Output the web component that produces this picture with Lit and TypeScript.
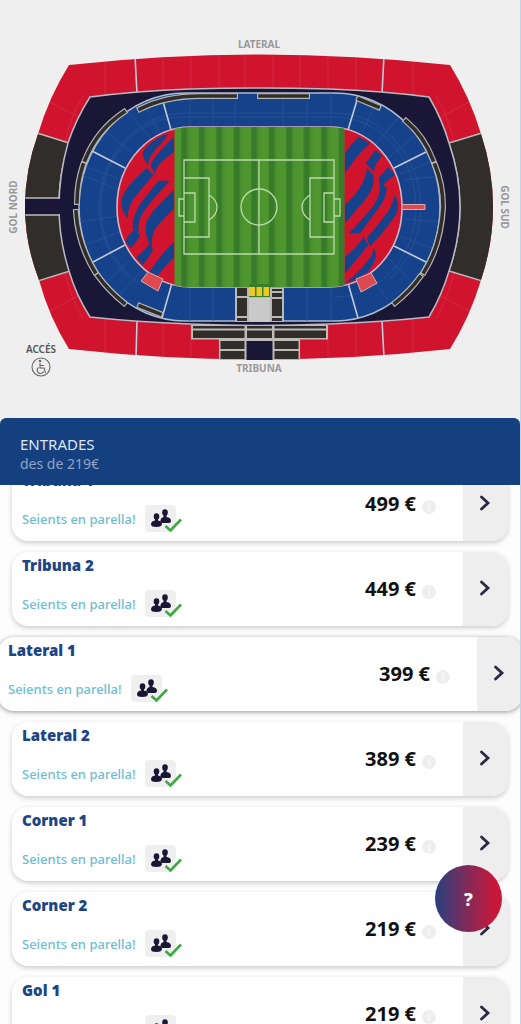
import { LitElement, html, svg, css } from "lit";
import { customElement, property } from "lit/decorators.js";

interface Zone {
  name: string;
  price: number;
  active?: boolean;
}

const ZONES: Zone[] = [
  { name: "Tribuna 1", price: 499 },
  { name: "Tribuna 2", price: 449 },
  { name: "Lateral 1", price: 399, active: true },
  { name: "Lateral 2", price: 389 },
  { name: "Corner 1", price: 239 },
  { name: "Corner 2", price: 219 },
  { name: "Gol 1", price: 219 },
];

const OUTER =
  "M69 65Q259 44 450 65Q470 97 481 134Q493 170 493 207Q493 244 481 280Q470 317 450 349Q259 370 69 349Q49 317 39 280Q25 244 25 207Q25 170 38 134Q49 97 69 65Z";
const INNER =
  "M90 97Q136 91 190 89Q259 87 329 89Q383 91 429 97Q442 119 449 143Q460 175 460 207Q460 239 449 271Q442 295 429 317Q383 322 329 324Q259 327 190 324Q136 322 90 317Q76 295 69 271Q59 239 59 207Q59 175 68 143Q76 119 90 97Z";
const BOWL =
  "M185 93H335A105 114 0 0 1 335 321H185A106 114 0 0 1 185 93Z";
const FIELD =
  "M190 127H330A72 80 0 0 1 330 287H190A73 80 0 0 1 190 127Z";

const BARS = [
  "M140 109Q165 96 200 96H235",
  "M260 96H307",
  "M124 112Q97 130 85 160",
  "M83 165Q77 183 77 202",
  "M76 212Q78 244 95 272",
  "M98 276Q108 290 124 303",
  "M140 306L160 314",
  "M359 99L378 107",
  "M406 121Q424 136 433 160",
  "M435 165Q443 184 443 207Q441 245 424 272",
  "M420 277Q410 291 395 303",
];

const WEST = [
  "M190 45Q135 75 128 100Q130 120 145 135Q145 105 185 70L205 42Z",
  "M222 50Q160 110 152 135L165 165Q165 145 185 125L222 95Z",
  "M140 145Q75 200 64 240Q62 275 84 295Q80 260 110 225L160 165Z",
  "M175 182H210Q130 265 118 300Q112 325 118 340L98 325Q95 290 125 245Q150 215 175 182Z",
  "M222 210Q150 275 138 310Q132 350 158 392Q148 350 170 320L222 265Z",
  "M102 328L120 345Q115 360 92 385L75 362Z",
  "M150 370L158 390Q150 410 128 435L108 412Q135 392 150 370Z",
  "M222 365Q190 395 148 455L170 470Q195 440 222 412Z",
];
const EAST = [
  "M70 50L105 70Q70 100 30 160V100Q45 75 70 50Z",
  "M122 90L142 108Q118 130 118 155L92 130Z",
  "M96 145L115 165Q122 200 90 240L30 310V255Q90 200 96 145Z",
  "M160 140L180 165Q150 185 140 205L130 175Z",
  "M134 185L155 205Q155 235 130 265L75 340H42Q85 295 110 265Q140 225 134 185Z",
  "M178 225Q195 245 185 280Q165 315 105 380L95 355Q150 290 165 265Q175 245 178 225Z",
  "M85 350L100 375Q85 395 30 460V410Q65 385 85 350Z",
  "M115 385Q130 400 118 425L100 455L60 480L30 490Q75 455 100 420Q115 405 115 385Z",
];

@customElement("stadium-map")
class StadiumMap extends LitElement {
  static styles = css`
    :host { display: block; }
    .map { display: block; width: 100%; height: auto; }
    .label { font: 700 10px "Noto Sans", "Open Sans", sans-serif; fill: #999; text-anchor: middle; }
    .dark { fill: #555; font-weight: 600; }
    .dark-seat { fill: #302d2a; stroke: #bbb; stroke-width: 1.4; }
    .seam { stroke: #c3cbd8; stroke-width: 1.6; fill: none; }
    .red-seam { stroke: #da3049; stroke-width: 0.7; fill: none; }
    .blue-seam { stroke: #2c5797; stroke-width: 0.7; fill: none; }
    .chalk { stroke: #b9dbae; stroke-width: 1.3; fill: none; }
    .pink { fill: #dc4a50; stroke: #d9a9b6; stroke-width: 1; }
  `;

  render() {
    return html`<svg class="map" viewBox="0 0 520 418" role="img" aria-label="Mapa de l'estadi">
      <defs>
        <clipPath id="outer"><path d=${OUTER} /></clipPath>
        <clipPath id="bowl"><path d=${BOWL} /></clipPath>
        <clipPath id="field"><path d=${FIELD} /></clipPath>
        <linearGradient id="mow" x1="175" x2="192.5" y1="0" y2="0" gradientUnits="userSpaceOnUse" spreadMethod="repeat">
          <stop offset="0" stop-color="#4f962f" />
          <stop offset=".3" stop-color="#4f962f" />
          <stop offset=".42" stop-color="#377a29" />
          <stop offset=".62" stop-color="#377a29" />
          <stop offset=".75" stop-color="#498f2d" />
          <stop offset="1" stop-color="#4f962f" />
        </linearGradient>
      </defs>

      <path d=${OUTER} fill="#d0142e" />
      <g clip-path="url(#outer)">
        ${[105, 163, 191, 219, 245, 273, 300, 328, 356, 413].map(
          (x) => svg`<path class="red-seam" d="M${x} 50V100M${x} 317V365" />`,
        )}
        <path class="red-seam" d="M50 102L78 117M469 102L441 117M50 311L78 296M469 311L441 296M83 96Q70 118 65 142M436 96Q449 118 454 142M83 319Q70 296 65 272M436 319Q449 296 454 272" />
        <path class="seam" d="M135 55L137 94M384 55L382 94M137 320L136 358M382 320L384 358" />
        <path d="M20 196H64V217H20Z" fill="#1a1736" />
        <path class="dark-seat" d="M37 133L69 143Q60 170 59 198H20Q22 160 37 133ZM20 215H60Q61 245 70 271L38 281Q20 245 20 215ZM482 133L449 143Q460 175 460 207Q460 239 449 271L482 281Q500 240 500 207Q500 170 482 133Z" />
      </g>
      <path d=${INNER} fill="#1a1736" stroke="#b9b9c4" stroke-width="1.5" />
      <path d="M25 199H66V214H25Z" fill="#1a1736" />

      <path d=${BOWL} fill="#15428a" stroke="#aebbd0" stroke-width="1.5" />
      <g clip-path="url(#bowl)">
        <path class="blue-seam" d="M190 88V128M213 88V128M235 88V128M283 88V128M307 88V128M331 88V128M190 287V322M213 287V322M307 287V322M331 287V322M104 130L135 155M125 108L150 138M143 100L160 133M80 165L118 178M78 222L118 216M82 175L118 190M85 245L120 232M119 295L143 270M104 284L134 256M376 104L362 132M398 118L375 145M414 136L388 158M440 176L404 180M440 222L404 219M410 280L386 256M388 300L365 270M436 160L400 174M436 250L400 236" />
        <path class="blue-seam" d="M185 117H335A81 90 0 0 1 335 297M185 117A81 90 0 0 0 140 284M185 113H335A86 94 0 0 1 390 279M185 113A86 94 0 0 0 130 279" />
        <path class="seam" d="M162 98L171 130M92 151L125 168M358 97L348 130M426 152L394 168M93 262L125 245M162 318L172 283M426 262L394 246M358 318L348 283" />
      </g>
      ${BARS.map(
        (d) => svg`<path d=${d} fill="none" stroke="#b4b4b4" stroke-width="6" stroke-linecap="square" />
          <path d=${d} fill="none" stroke="#302d2a" stroke-width="3.600" stroke-linecap="square" />`,
      )}

      <path d=${FIELD} fill="#d0142e" stroke="#d5b6c4" stroke-width="1.600" />
      <g clip-path="url(#field)">
        <g fill="#15428a" transform="translate(100 120) scale(.3333)">${WEST.map((d) => svg`<path d=${d} />`)}</g>
        <g fill="#15428a" transform="translate(335 120) scale(.3333)">${EAST.map((d) => svg`<path d=${d} />`)}</g>
        <rect x="174.500" y="126" width="170" height="162" fill="url(#mow)" />
      </g>
      <path class="chalk" d="M184 160H334V254H184ZM259 160V254M184 178H209V237H184M334 178H310V237H334M184 193H195V222H184M334 193H324V222H334M184 199H179V216H184M334 199H340V216H334M209 195Q217 200 217 207Q217 215 209 220M310 195Q302 200 302 207Q302 215 310 220" />
      <circle class="chalk" cx="259" cy="207" r="18" />
      <path class="pink" d="M141 281L148 272L163 279L158 291ZM356 279L371 273L377 283L361 292ZM402 204.500H425V209.500H402Z" />

      <path d="M235 288H284V322H235Z" fill="#b9b9b4" />
      <path d="M237 288H247V296H237ZM237 298H247V316H237ZM237 318H247V321H237ZM272 289H282V291H272ZM272 293H282V297H272ZM272 299H282V316H272ZM272 318H282V321H272Z" fill="#302d2a" />
      <path d="M249 298H270V322H249Z" fill="#c9c9c9" />
      <path d="M249 284H270V297H249Z" fill="#37802a" />
      <path d="M249 287H255V296H249ZM256.500 287H262V296H256.500ZM263.500 287H269V296H263.500Z" fill="#edc91f" />

      <path d="M191 325H328V339.500H300V360H219V339.500H191Z" fill="#bdbdb6" />
      <path d="M193 326H244.500V328.500H193ZM193 330.500H244.500V338H193ZM247 326H272V328.500H247ZM247 330.500H272V338H247ZM274.500 326H326V328.500H274.500ZM274.500 330.500H326V338H274.500ZM220.500 341H244.500V349H220.500ZM220.500 351H244.500V359H220.500ZM274.500 341H298.500V349H274.500ZM274.500 351H298.500V359H274.500Z" fill="#302d2a" />
      <path d="M246.500 341H272.500V360H246.500Z" fill="#1a1736" />

      <text class="label" x="259" y="48">LATERAL</text>
      <text class="label" x="259" y="372">TRIBUNA</text>
      <text class="label dark" x="41" y="353">ACCÉS</text>
      <text class="label" transform="translate(17 207) rotate(-90)">GOL NORD</text>
      <text class="label" transform="translate(501 207) rotate(90)">GOL SUD</text>
      <g fill="none" stroke="#666" stroke-width="1.100">
        <circle cx="41" cy="367" r="9" />
        <path d="M40 363V368H44L45.500 373M40 365.500H44M38.500 367.500A3.300 3.300 0 1 0 43.500 371.500" />
        <circle cx="40" cy="361" r=".8" fill="#666" />
      </g>
    </svg>`;
  }
}

@customElement("zone-card")
class ZoneCard extends LitElement {
  @property({ attribute: false }) zone!: Zone;

  static styles = css`
    :host { display: block; }
    .card {
      display: grid;
      grid-template-columns: 1fr auto 45px;
      height: 74px;
      border-radius: 16px;
      overflow: hidden;
      background: #fff;
      box-shadow: 0 2px 5px rgba(0, 0, 0, 0.2);
    }
    .active { box-shadow: 0 1px 5px rgba(0, 0, 0, 0.42); }
    .info { display: flex; flex-direction: column; justify-content: space-between; padding: 2px 0 8px 10px; }
    .name { margin: 0; font: 900 15px/22px "Noto Sans", sans-serif; color: #1d4585; }
    .pair { display: flex; align-items: center; gap: 9px; font: 500 13px/28px "Noto Sans", sans-serif; color: #6fbdd3; }
    .pair-icon { display: block; }
    .cost { display: flex; align-items: center; gap: 6px; padding: 0 27px 0 0; font: 700 20px/28px "Noto Sans", sans-serif; color: #111; }
    .hint {
      width: 14px; height: 14px; margin-top: 6px; padding: 0; border: 0; border-radius: 50%;
      background: #eee; color: #fafafa; font: 700 10px/14px "Noto Sans", sans-serif;
    }
    .go { display: grid; place-items: center; padding: 0 2px 2px 0; border: 0; background: #eee; }
  `;

  render() {
    const { name, price, active } = this.zone;
    return html`<article class="card ${active ? "active" : ""}">
      <div class="info">
        <h2 class="name">${name}</h2>
        <div class="pair">
          <span>Seients en parella!</span>
          <svg class="pair-icon" width="38" height="28" viewBox="0 0 38 28" aria-hidden="true">
            <rect width="31" height="27" rx="4" fill="#efefef" />
            <g fill="#1a1736">
              <ellipse cx="20" cy="7.500" rx="2.800" ry="3.300" />
              <path d="M18.500 9H21.500V12Q26 12.500 26 16Q26 18 24 18H17Q15 18 15.500 15Q16 12.500 18.500 12Z" />
              <ellipse cx="11.500" cy="11.500" rx="2.800" ry="3.300" />
              <path d="M10 13H13V15.500Q17 16 17 19.500Q16 22 11.500 22Q6 22 6 19.500Q6 16 10 15.500Z" />
            </g>
            <path d="M20.500 21L25.500 25.500L36 14.500" fill="none" stroke="#3fa845" stroke-width="2.600" />
          </svg>
        </div>
      </div>
      <div class="cost">
        <span>${price} €</span>
        <button class="hint" aria-label="Informació">i</button>
      </div>
      <button class="go" aria-label="Veure ${name}">
        <svg width="12" height="18" viewBox="0 0 12 18">
          <path d="M2.500 3L9 9L2.500 15" fill="none" stroke="#2b2945" stroke-width="2.800" stroke-linecap="round" />
        </svg>
      </button>
    </article>`;
  }
}

@customElement("app-root")
class AppRoot extends LitElement {
  static styles = css`
    :host {
      display: flex;
      flex-direction: column;
      position: relative;
      height: 100vh;
      box-sizing: border-box;
      overflow: hidden;
      border-right: 1px solid #c6d4ea;
      background: #efefef;
    }
    .header {
      flex: none;
      padding: 17px 20px 12px;
      border-radius: 6px 6px 0 0;
      background: #15407f;
      font: 400 15px/19px "Noto Sans", sans-serif;
      color: #dde5f0;
    }
    .title { margin: 0; font: inherit; }
    .from { margin: 0; font-size: 14px; color: #8ea4c6; }
    .viewport { flex: 1; min-height: 0; overflow: hidden; background: #fdfdfd; }
    .zones { display: grid; gap: 11px; margin: -18px 0 0; padding: 0 12px; list-style: none; }
    .wide { margin: 0 -14px; }
    .help {
      position: absolute;
      right: 18px;
      bottom: 92px;
      width: 67px;
      height: 67px;
      border: 0;
      border-radius: 50%;
      background: linear-gradient(90deg, #27407f, #7b2c5b 45%, #c8183a 88%);
      color: #fff;
      font: 800 18px/24px "Noto Sans", sans-serif;
    }
  `;

  render() {
    return html`
      <stadium-map></stadium-map>
      <header class="header">
        <h1 class="title">ENTRADES</h1>
        <p class="from">des de 219€</p>
      </header>
      <div class="viewport">
        <ul class="zones">
          ${ZONES.map((z) => html`<li class=${z.active ? "wide" : ""}><zone-card .zone=${z}></zone-card></li>`)}
        </ul>
      </div>
      <button class="help" aria-label="Ajuda">?</button>
    `;
  }
}
